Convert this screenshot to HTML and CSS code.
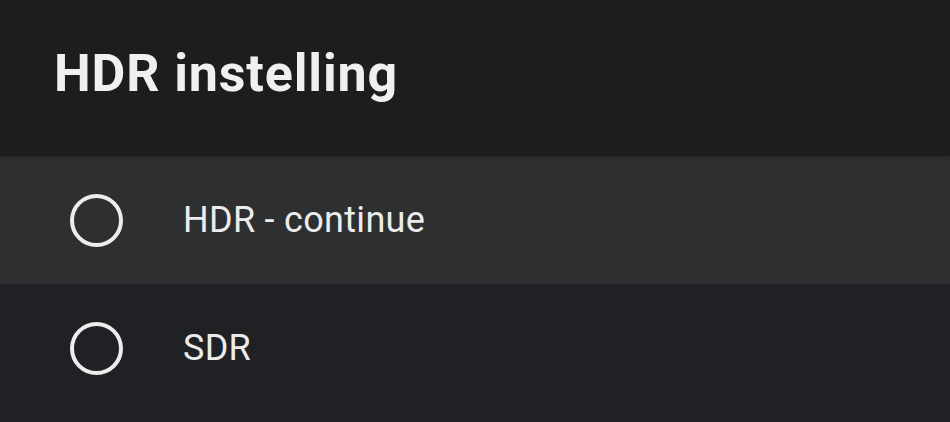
FILE: index.html
```html
<!DOCTYPE html>
<html lang="nl">
<head>
<meta charset="utf-8">
<title>HDR instelling</title>
<link rel="stylesheet" href="styles.css">
</head>
<body>
<div class="screen">
  <header class="header">
    <h1 class="title">HDR instelling</h1>
  </header>
  <ul class="options">
    <li class="option is-focused">
      <span class="radio"></span>
      <span class="label">HDR - continue</span>
    </li>
    <li class="option">
      <span class="radio"></span>
      <span class="label">SDR</span>
    </li>
  </ul>
</div>
</body>
</html>
```

FILE: styles.css
```css
* { box-sizing: border-box; }
html, body {
  margin: 0;
  padding: 0;
  height: 100%;
}
body {
  background: #202124;
  font-family: Roboto, "Noto Sans", "Liberation Sans", sans-serif;
  color: #ececec;
  overflow: hidden;
}
.screen {
  width: 950px;
  height: 422px;
  display: flex;
  flex-direction: column;
}
.header {
  height: 156px;
  background: #1c1d1f;
  padding: 48px 0 0 54px;
  position: relative;
  z-index: 1;
  box-shadow: 0 2px 4px rgba(0, 0, 0, 0.25);
}
.title {
  margin: 0;
  font-size: 52px;
  line-height: 52px;
  letter-spacing: 0.85px;
  font-weight: 700;
  color: #f0f0f0;
}
.options {
  list-style: none;
  margin: 0;
  padding: 0;
}
.option {
  height: 128px;
  display: flex;
  align-items: center;
  padding-left: 70px;
  gap: 60px;
}
.option.is-focused {
  background: #2e2f31;
}
.radio {
  width: 53px;
  height: 53px;
  border: 4px solid #ededed;
  border-radius: 50%;
  flex: none;
}
.label {
  font-size: 36px;
  letter-spacing: 0.3px;
  font-weight: 400;
  color: #ececec;
}
```
